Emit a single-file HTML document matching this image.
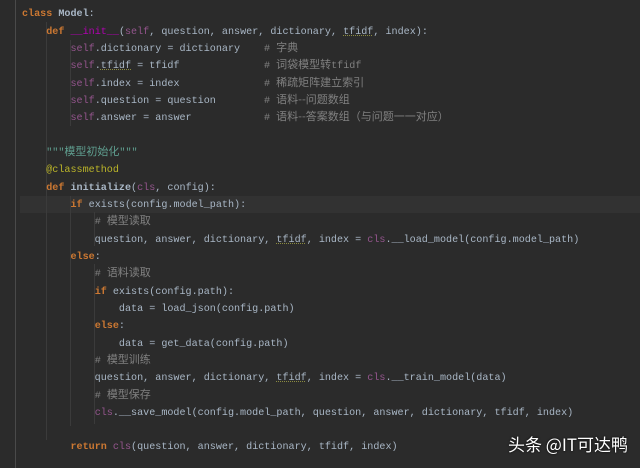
<!DOCTYPE html>
<html><head><meta charset="utf-8"><style>
body{margin:0;width:640px;height:468px;background:#2b2b2b;overflow:hidden;position:relative;font-family:"Liberation Mono","Noto Sans CJK SC",monospace;font-size:10.1px;color:#a9b7c6}
.l{position:absolute;left:22px;height:17px;line-height:17px;white-space:pre;margin-top:2px}
.k{color:#cc7832;font-weight:bold}
.s{color:#94558d}
.m{color:#b200b2}
.c{color:#808080;font-family:"Liberation Mono","Noto Sans CJK SC",monospace}
.d{color:#5f9e8f}
.a{color:#bbb529}
.b{font-weight:bold}
.u{text-decoration:underline dotted #8a8a40}
.cm{position:absolute;left:242px;top:0;line-height:17px}
.cj{font-family:"Noto Sans CJK SC",sans-serif;font-size:11px;line-height:10px}
.g{position:absolute;width:1px;background:#3b3b3b}
.hl{position:absolute;left:20px;right:0;background:#323232}
.gut{position:absolute;left:15px;top:0;width:1px;height:468px;background:#4a4a4a}
.wm{position:absolute;left:508px;top:431px;color:#fff;font-family:"Noto Sans CJK SC","Liberation Sans",sans-serif;font-size:17px;text-shadow:0 0 2px #000}
</style></head><body>
<div class="hl" style="top:196px;height:17px"></div>
<div class="gut"></div>
<div class="g" style="left:46px;top:22px;height:418px"></div>
<div class="g" style="left:70px;top:40px;height:86px"></div>
<div class="g" style="left:70px;top:196px;height:230px"></div>
<div class="g" style="left:94px;top:212px;height:34px"></div>
<div class="g" style="left:94px;top:264px;height:160px"></div>
<div class="l" style="top:4px"><span class="k">class</span> <span class="b">Model</span>:</div>
<div class="l" style="top:22px">    <span class="k">def</span> <span class="m">__init__</span>(<span class="s">self</span>, question, answer, dictionary, <span class="u">tfidf</span>, index):</div>
<div class="l" style="top:39px">        <span class="s">self</span>.dictionary = dictionary<span class="c cm"># <span class="cj">字典</span></span></div>
<div class="l" style="top:56px">        <span class="s">self</span>.<span class="u">tfidf</span> = tfidf<span class="c cm"># <span class="cj">词袋模型转</span>tfidf</span></div>
<div class="l" style="top:74px">        <span class="s">self</span>.index = index<span class="c cm"># <span class="cj">稀疏矩阵建立索引</span></span></div>
<div class="l" style="top:91px">        <span class="s">self</span>.question = question<span class="c cm"># <span class="cj">语料--问题数组</span></span></div>
<div class="l" style="top:108px">        <span class="s">self</span>.answer = answer<span class="c cm"># <span class="cj">语料--答案数组（与问题一一对应）</span></span></div>
<div class="l" style="top:143px">    <span class="d">"""<span class="cj">模型初始化</span>"""</span></div>
<div class="l" style="top:160px">    <span class="a">@classmethod</span></div>
<div class="l" style="top:178px">    <span class="k">def</span> <span class="b">initialize</span>(<span class="s">cls</span>, config):</div>
<div class="l" style="top:195px">        <span class="k">if</span> exists(config.model_path):</div>
<div class="l" style="top:212px">            <span class="c"># <span class="cj">模型读取</span></span></div>
<div class="l" style="top:230px">            question, answer, dictionary, <span class="u">tfidf</span>, index = <span class="s">cls</span>.__load_model(config.model_path)</div>
<div class="l" style="top:247px">        <span class="k">else</span>:</div>
<div class="l" style="top:264px">            <span class="c"># <span class="cj">语料读取</span></span></div>
<div class="l" style="top:282px">            <span class="k">if</span> exists(config.path):</div>
<div class="l" style="top:299px">                data = load_json(config.path)</div>
<div class="l" style="top:316px">            <span class="k">else</span>:</div>
<div class="l" style="top:334px">                data = get_data(config.path)</div>
<div class="l" style="top:351px">            <span class="c"># <span class="cj">模型训练</span></span></div>
<div class="l" style="top:368px">            question, answer, dictionary, <span class="u">tfidf</span>, index = <span class="s">cls</span>.__train_model(data)</div>
<div class="l" style="top:386px">            <span class="c"># <span class="cj">模型保存</span></span></div>
<div class="l" style="top:403px">            <span class="s">cls</span>.__save_model(config.model_path, question, answer, dictionary, tfidf, index)</div>
<div class="l" style="top:437px">        <span class="k">return</span> <span class="s">cls</span>(question, answer, dictionary, tfidf, index)</div>
<div class="wm">头条 @IT可达鸭</div>
</body></html>
